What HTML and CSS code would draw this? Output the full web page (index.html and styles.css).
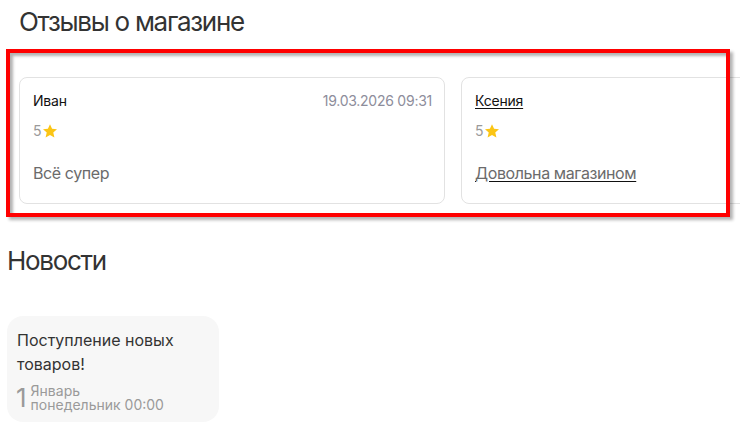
FILE: index.html
```html
<!DOCTYPE html>
<html lang="ru">
<head>
<meta charset="utf-8">
<title>Отзывы о магазине</title>
<link rel="stylesheet" href="styles.css">
</head>
<body>
<section class="reviews">
  <h2 class="section-title">Отзывы о магазине</h2>
  <div class="review-track">
    <div class="review-card">
      <div class="review-head">
        <span class="review-name">Иван</span>
        <span class="review-date">19.03.2026 09:31</span>
      </div>
      <div class="review-rating">5<svg class="star" viewBox="0 0 24 24" width="16" height="16"><path d="M12 1.8l3.1 6.9 7.4.7-5.6 5 1.7 7.3L12 17.9l-6.6 3.8 1.7-7.3-5.6-5 7.4-.7z" fill="#fbc515"/></svg></div>
      <div class="review-text">Всё супер</div>
    </div>
    <a class="review-card review-link" href="#">
      <div class="review-head">
        <span class="review-name underline">Ксения</span>
        <span class="review-date">19.03.2026 09:31</span>
      </div>
      <div class="review-rating">5<svg class="star" viewBox="0 0 24 24" width="16" height="16"><path d="M12 1.8l3.1 6.9 7.4.7-5.6 5 1.7 7.3L12 17.9l-6.6 3.8 1.7-7.3-5.6-5 7.4-.7z" fill="#fbc515"/></svg></div>
      <div class="review-text"><span class="underline">Довольна магазином</span></div>
    </a>
  </div>
  <div class="highlight"></div>
</section>
<section class="news">
  <h2 class="section-title">Новости</h2>
  <div class="news-card">
    <div class="news-title">Поступление новых товаров!</div>
    <div class="news-date">
      <span class="news-day">1</span>
      <span class="news-meta">Январь<br>понедельник 00:00</span>
    </div>
  </div>
</section>
</body>
</html>
```
FILE: styles.css
```css
html, body {
  margin: 0;
  padding: 0;
  background: #fff;
  overflow: hidden;
}
body {
  font-family: Inter, "Noto Sans", sans-serif;
  color: #333;
  width: 740px;
  height: 433px;
}
.section-title {
  margin: 0;
  font-size: 26px;
  line-height: 32px;
  font-weight: 400;
  color: #333;
  letter-spacing: -1.3px;
}
.reviews {
  padding: 6px 0 0 19px;
}
.review-track {
  margin-top: 39px;
  display: flex;
  gap: 16px;
  overflow: hidden;
}
.review-card {
  flex: 0 0 426px;
  box-sizing: border-box;
  height: 127px;
  border: 1px solid #e2e2e2;
  border-radius: 8px;
  padding: 13px 12px 0 13px;
  text-decoration: none;
  color: #111;
  display: block;
}
.review-head {
  display: flex;
  justify-content: space-between;
  line-height: 20px;
}
.review-name {
  font-size: 14px;
  color: #111;
  letter-spacing: -0.2px;
}
.review-date {
  font-size: 14px;
  color: #8d8d9b;
  letter-spacing: -0.25px;
}
.underline {
  text-decoration: underline;
  text-decoration-color: #111;
  text-underline-offset: 2px;
}
.review-rating {
  margin-top: 10px;
  display: flex;
  align-items: center;
  font-size: 14px;
  line-height: 20px;
  color: #9a9a9a;
}
.review-text {
  margin-top: 22px;
  font-size: 16px;
  line-height: 20px;
  color: #6b6b6b;
  letter-spacing: -0.4px;
}
.highlight {
  position: absolute;
  left: 6px;
  top: 49px;
  width: 724px;
  height: 168px;
  box-sizing: border-box;
  border: 4px solid #ff0000;
  box-shadow: inset 3px 3px 3px rgba(0, 0, 0, 0.3), 3px 3px 3px rgba(0, 0, 0, 0.3);
  pointer-events: none;
}
.news {
  padding: 41px 0 0 7px;
}
.news-card {
  margin-top: 39px;
  width: 212px;
  height: 106px;
  box-sizing: border-box;
  background: #f7f7f7;
  border-radius: 16px;
  padding: 12px 10px 0 9px;
}
.news-title {
  font-size: 16px;
  line-height: 24px;
  color: #333;
  padding-left: 1px;
}
.news-date {
  margin-top: 8px;
  display: flex;
  align-items: center;
  gap: 4px;
  color: #9a9a9a;
}
.news-day {
  font-size: 26px;
  line-height: 28px;
  color: #9a9a9a;
}
.news-meta {
  font-size: 14px;
  line-height: 14px;
  color: #9a9a9a;
}
```
